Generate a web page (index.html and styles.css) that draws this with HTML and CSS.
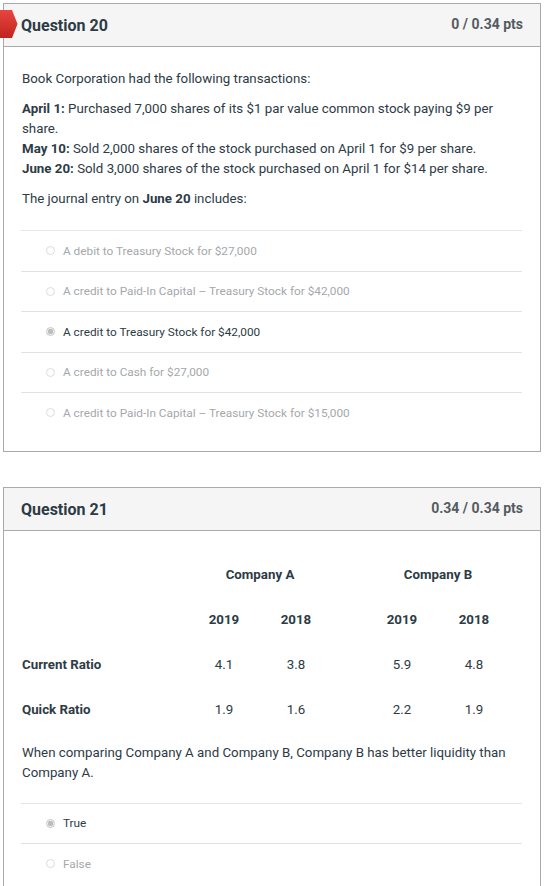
FILE: index.html
```html
<!DOCTYPE html>
<html>
<head>
<meta charset="utf-8">
<link rel="stylesheet" href="styles.css">
</head>
<body>
<div class="page">
  <div class="card">
    <svg class="marker" width="18" height="28" viewBox="0 0 18 28">
      <defs>
        <linearGradient id="rg" x1="0" y1="0" x2="0" y2="1">
          <stop offset="0" stop-color="#e8463e"/>
          <stop offset="1" stop-color="#c0241f"/>
        </linearGradient>
      </defs>
      <polygon points="0,0 12,0 17.5,14 12,28 0,28" fill="url(#rg)"/>
    </svg>
    <div class="head">
      <span class="title">Question 20</span>
      <span class="pts">0 / 0.34 pts</span>
    </div>
    <div class="body">
      <p class="txt">Book Corporation had the following transactions:</p>
      <p class="txt"><b>April 1:</b> Purchased 7,000 shares of its $1 par value common stock paying $9 per share.<br><b>May 10:</b> Sold 2,000 shares of the stock purchased on April 1 for $9 per share.<br><b>June 20:</b> Sold 3,000 shares of the stock purchased on April 1 for $14 per share.</p>
      <p class="txt">The journal entry on <b>June 20</b> includes:</p>
      <div class="answers a1">
        <div class="ans"><span class="radio"></span><span class="lbl">A debit to Treasury Stock for $27,000</span></div>
        <div class="ans"><span class="radio"></span><span class="lbl">A credit to Paid-In Capital – Treasury Stock for $42,000</span></div>
        <div class="ans sel"><span class="radio"></span><span class="lbl">A credit to Treasury Stock for $42,000</span></div>
        <div class="ans"><span class="radio"></span><span class="lbl">A credit to Cash for $27,000</span></div>
        <div class="ans"><span class="radio"></span><span class="lbl">A credit to Paid-In Capital – Treasury Stock for $15,000</span></div>
      </div>
    </div>
  </div>

  <div class="card">
    <div class="head">
      <span class="title">Question 21</span>
      <span class="pts">0.34 / 0.34 pts</span>
    </div>
    <div class="body body2">
      <div class="tbl">
        <div class="c lab"></div><div class="c span2 bold">Company A</div><div class="c gap"></div><div class="c span2 bold">Company B</div>
        <div class="c lab"></div><div class="c bold">2019</div><div class="c bold">2018</div><div class="c gap"></div><div class="c bold">2019</div><div class="c bold">2018</div>
        <div class="c lab bold">Current Ratio</div><div class="c">4.1</div><div class="c">3.8</div><div class="c gap"></div><div class="c">5.9</div><div class="c">4.8</div>
        <div class="c lab bold">Quick Ratio</div><div class="c">1.9</div><div class="c">1.6</div><div class="c gap"></div><div class="c">2.2</div><div class="c">1.9</div>
      </div>
      <p class="txt">When comparing Company A and Company B, Company B has better liquidity than Company A.</p>
      <div class="answers a2">
        <div class="ans sel"><span class="radio"></span><span class="lbl">True</span></div>
        <div class="ans"><span class="radio"></span><span class="lbl">False</span></div>
      </div>
    </div>
  </div>
</div>
</body>
</html>
```
FILE: styles.css
```css
html, body {
  margin: 0;
  padding: 0;
  background: #fff;
}
body {
  font-family: Roboto, "Liberation Sans", Arial, sans-serif;
  color: #2d3b45;
}
.page {
  padding: 3px 4px 0 3px;
}
.card {
  position: relative;
  border: 1px solid #aaaaaa;
  margin-bottom: 35px;
}
.marker {
  position: absolute;
  left: -4px;
  top: 6px;
}
.head {
  height: 42px;
  background: #f5f5f5;
  border-bottom: 1px solid #aaaaaa;
  display: flex;
  justify-content: space-between;
  padding: 0 17px;
}
.title {
  font-size: 16px;
  font-weight: 700;
  line-height: 20px;
  padding-top: 12px;
  color: #2d3b45;
}
.pts {
  font-size: 14px;
  font-weight: 700;
  line-height: 20px;
  padding-top: 10px;
  color: #555b61;
}
.body {
  padding: 22px 18px 18px 17px;
}
.txt {
  margin: 0 0 10px 0;
  padding-left: 1px;
  font-size: 13.3px;
  line-height: 20px;
}
.txt b {
  font-weight: 700;
}
.answers {
  margin-top: 21px;
}
.ans {
  border-top: 1px solid #dfe1e3;
  height: 39.5px;
  display: flex;
  align-items: center;
  padding-left: 25px;
  font-size: 11.8px;
  color: #a5a8ab;
  font-weight: 400;
}
.ans:first-child {
  border-top-color: #e4e6e8;
}
.radio {
  width: 7px;
  height: 7px;
  border-radius: 50%;
  border: 1px solid #dcdcdc;
  background: #fff;
  margin-right: 8px;
  flex: none;
}
.ans.sel {
  color: #2d3b45;
}
.ans.sel .radio {
  border-color: #c8c8c8;
  background: radial-gradient(circle, #bdbdbd 0 2.5px, #f0f0f0 3px);
}
.body2 {
  padding-top: 21px;
}
.tbl {
  display: grid;
  grid-template-columns: 166px 72px 72px 34px 72px 72px;
  grid-auto-rows: 45px;
  margin-left: 1px;
  font-size: 13.3px;
}
.c {
  display: flex;
  align-items: center;
  justify-content: center;
  color: #2d3b45;
}
.span2 {
  grid-column: span 2;
}
.lab {
  justify-content: flex-start;
}
.bold {
  font-weight: 700;
}
.tbl + .txt {
  margin-top: 11px;
}
.a2 {
  margin-top: 20px;
}
```
